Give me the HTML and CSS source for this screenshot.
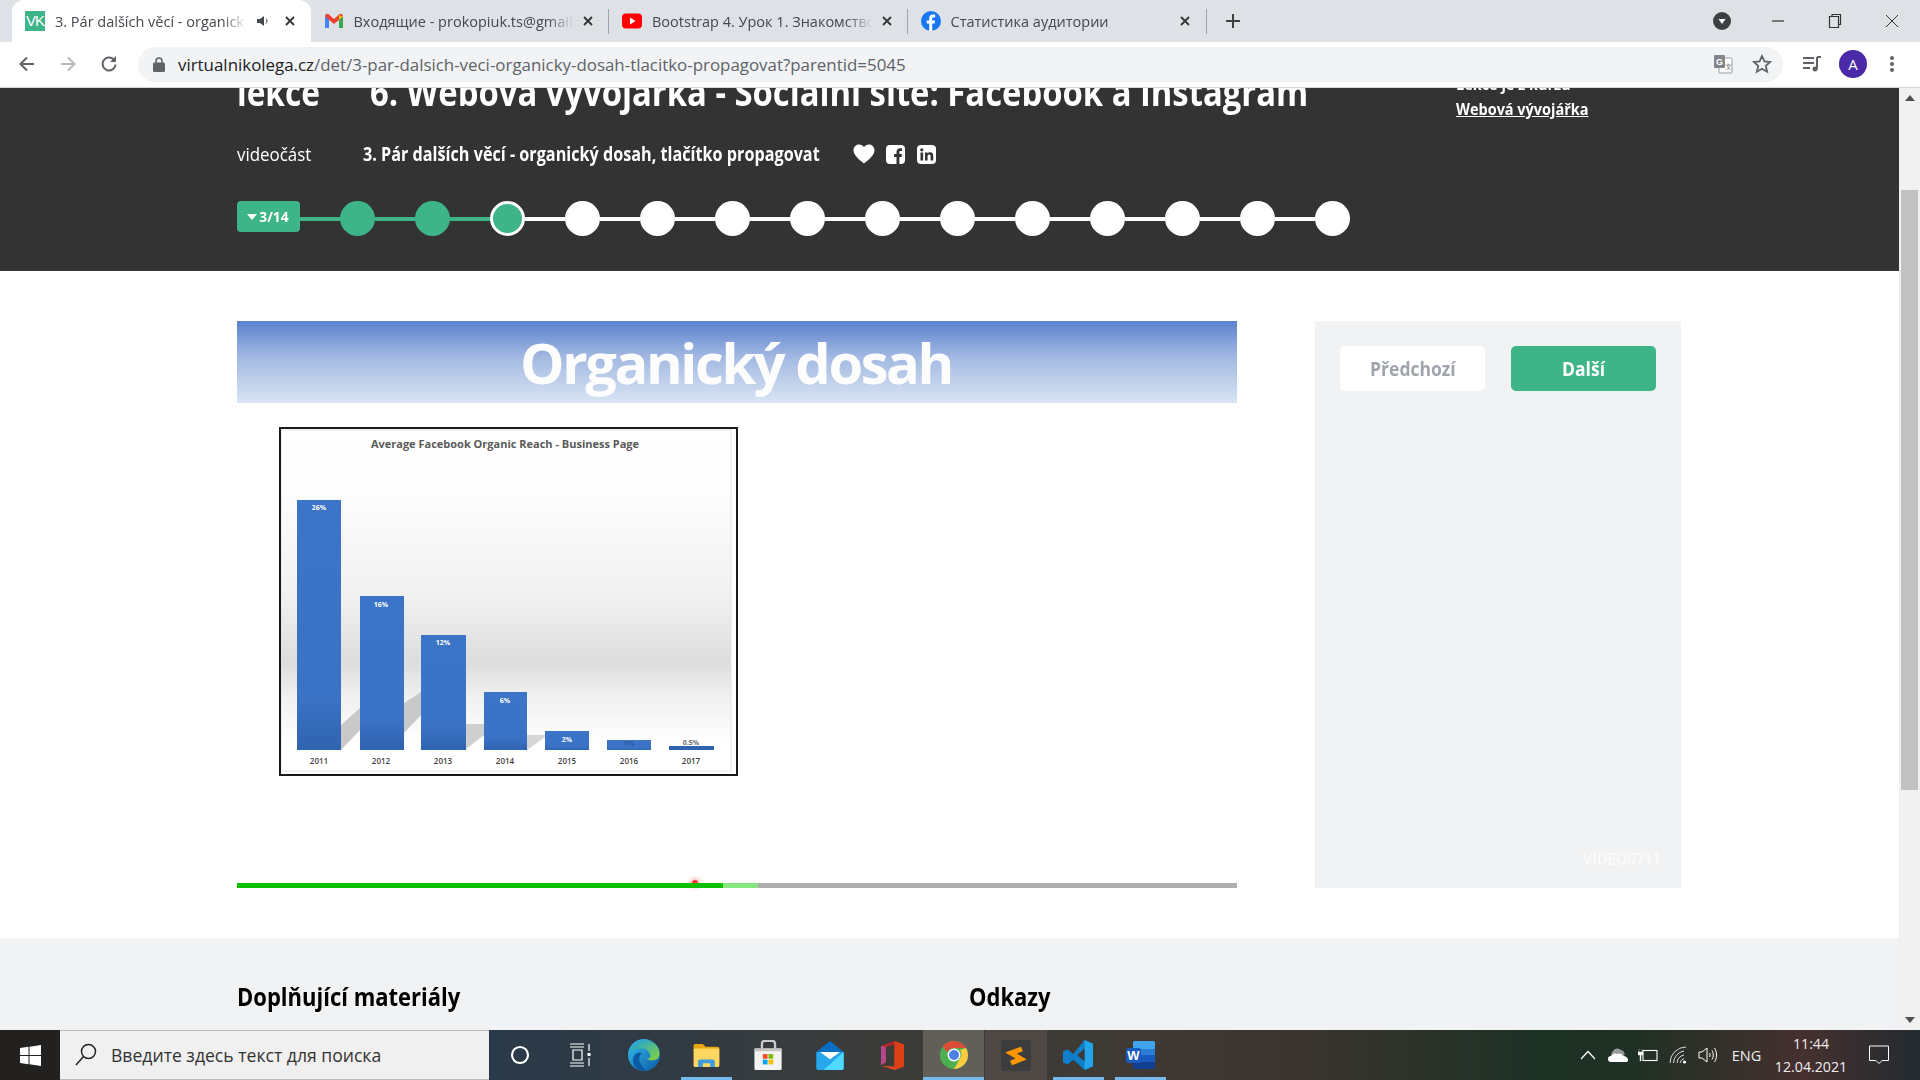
FILE: index.html
```html
<!DOCTYPE html>
<html lang="en">
<head>
    <meta charset="UTF-8">
    <title>3. Pár dalších věcí - organický dosah</title>
    <link rel="stylesheet" href="styles.css">
</head>
<body>
<div class="browser">
    <div class="tabstrip">
        <div class="tab tab-active">
            <span class="fav-vk">VK</span>
            <span class="tab-title tab-title-short">3. Pár dalších věcí - organický dosah</span>
            <svg class="tab-sound" width="14" height="14" viewBox="0 0 14 14"><path d="M1 5h3l4-3v10l-4-3H1z" fill="#45484d"/><path d="M10 4.500c1.300 1.500 1.300 3.500 0 5" stroke="#45484d" fill="none"/></svg>
            <svg class="tab-x" width="12" height="12" viewBox="0 0 12 12"><path d="M2 2l8 8M10 2l-8 8" stroke="#333" stroke-width="1.800"/></svg>
        </div>
        <div class="tab">
            <svg class="fav" width="20" height="16" viewBox="0 0 20 16"><path d="M1 15V3l4 3V15z" fill="#4285f4"/><path d="M15 15V6l4-3v12z" fill="#34a853"/><path d="M1 3.500C1 1 3.500 0 5 1.500L10 6l5-4.500C16.500 0 19 1 19 3.500L15 7l-5 4-5-4z" fill="#ea4335"/><path d="M15 2l4 1.500L15 7z" fill="#fbbc04"/></svg>
            <span class="tab-title">Входящие - prokopiuk.ts@gmail.com</span>
            <svg class="tab-x" width="12" height="12" viewBox="0 0 12 12"><path d="M2 2l8 8M10 2l-8 8" stroke="#333" stroke-width="1.800"/></svg>
        </div>
        <div class="tab tab-sep">
            <svg class="fav" width="20" height="16" viewBox="0 0 20 16"><rect width="20" height="15" y="0.500" rx="4" fill="#f00"/><path d="M8 4.500l5.500 3.500L8 11.500z" fill="#fff"/></svg>
            <span class="tab-title">Bootstrap 4. Урок 1. Знакомство с фреймворком</span>
            <svg class="tab-x" width="12" height="12" viewBox="0 0 12 12"><path d="M2 2l8 8M10 2l-8 8" stroke="#333" stroke-width="1.800"/></svg>
        </div>
        <div class="tab tab-sep">
            <svg class="fav" width="20" height="20" viewBox="0 0 20 20"><circle cx="10" cy="10" r="10" fill="#1877f2"/><path d="M11.200 20v-7.500h2.500l.4-3h-2.900V7.800c0-.9.300-1.400 1.500-1.400h1.500V3.700c-.3 0-1.200-.1-2.200-.1-2.300 0-3.800 1.400-3.800 3.900v2H5.700v3h2.500V20z" fill="#fff"/></svg>
            <span class="tab-title">Статистика аудитории</span>
            <svg class="tab-x" width="12" height="12" viewBox="0 0 12 12"><path d="M2 2l8 8M10 2l-8 8" stroke="#333" stroke-width="1.800"/></svg>
        </div>
        <div class="tab-new">
            <svg width="16" height="16" viewBox="0 0 16 16"><path d="M8 1v14M1 8h14" stroke="#3c4043" stroke-width="2"/></svg>
        </div>
        <div class="tab-media">
            <svg width="18" height="18" viewBox="0 0 18 18"><circle cx="9" cy="9" r="9" fill="#3c4043"/><path d="M5.500 7h7L9 12z" fill="#fff"/></svg>
        </div>
        <div class="win-btn">
            <svg width="14" height="14" viewBox="0 0 14 14"><path d="M1 7h12" stroke="#333" stroke-width="1.200"/></svg>
        </div>
        <div class="win-btn">
            <svg width="14" height="16" viewBox="0 0 14 16"><path d="M1.500 3.500h9v11h-9zM4 3.500V1.500h8.500v10h-2" stroke="#333" stroke-width="1.200" fill="none"/></svg>
        </div>
        <div class="win-btn">
            <svg width="14" height="14" viewBox="0 0 14 14"><path d="M1 1l12 12M13 1L1 13" stroke="#333" stroke-width="1"/></svg>
        </div>
    </div>

    <div class="toolbar">
        <svg class="nav-ico" width="18" height="18" viewBox="0 0 18 18"><path d="M16 9H3M9 2.500L2.500 9 9 15.500" stroke="#5f6368" stroke-width="2" fill="none"/></svg>
        <svg class="nav-ico" width="18" height="18" viewBox="0 0 18 18"><path d="M2 9h13M9 2.500L15.500 9 9 15.500" stroke="#b7b9bc" stroke-width="2" fill="none"/></svg>
        <svg class="nav-ico" width="18" height="18" viewBox="0 0 18 18"><path d="M15.500 9.500a6.500 6.500 0 1 1-1.800-5" stroke="#5f6368" stroke-width="2" fill="none"/><path d="M16 1v6h-6z" fill="#5f6368"/></svg>
        <div class="omnibox">
            <svg width="12" height="15" viewBox="0 0 12 15"><rect y="5.500" width="12" height="9.500" rx="1.500" fill="#5f6368"/><path d="M3 6V4a3 3 0 0 1 6 0v2" stroke="#5f6368" stroke-width="1.600" fill="none"/></svg>
            <div class="url"><b>virtualnikolega.cz</b>/det/3-par-dalsich-veci-organicky-dosah-tlacitko-propagovat?parentid=5045</div>
            <svg class="omni-translate" width="20" height="20" viewBox="0 0 20 20"><rect x="6" y="4" width="13" height="15" rx="1" fill="#fff" stroke="#9a9da1"/><rect x="1" y="1" width="11" height="13" rx="1" fill="#80868b"/><text x="3" y="11" class="omni-g">G</text><text x="12" y="15" class="omni-x">文</text></svg>
            <svg class="omni-star" width="20" height="20" viewBox="0 0 20 20"><path d="M10 2l2.400 5.400 5.800.6-4.400 3.900 1.300 5.800L10 14.700l-5.100 3 1.300-5.800L1.800 8l5.800-.6z" stroke="#5f6368" stroke-width="1.800" fill="none"/></svg>
        </div>
        <svg class="tool-media" width="20" height="18" viewBox="0 0 20 18"><path d="M1 3h11M1 8h11M1 13h7" stroke="#5f6368" stroke-width="2"/><path d="M15 2h4M15 2v12" stroke="#5f6368" stroke-width="2" fill="none"/><circle cx="13" cy="14" r="2.500" fill="#5f6368"/></svg>
        <div class="avatar">A</div>
        <svg class="tool-dots" width="4" height="18" viewBox="0 0 4 18"><circle cx="2" cy="3" r="2" fill="#5f6368"/><circle cx="2" cy="9" r="2" fill="#5f6368"/><circle cx="2" cy="15" r="2" fill="#5f6368"/></svg>
    </div>

    <div class="viewport">
        <div class="page">
            <div class="head">
                <div class="head-left">
                    <div class="lesson-row">
                        <span class="lesson-label">lekce</span>
                        <span class="lesson-name">6. Webová vývojářka - Sociální sítě: Facebook a Instagram</span>
                    </div>
                    <div class="part-row">
                        <span class="part-label">videočást</span>
                        <span class="part-name">3. Pár dalších věcí - organický dosah, tlačítko propagovat</span>
                        <svg class="part-heart" width="22" height="20" viewBox="0 0 22 20"><path d="M11 19.500C4 14 .5 10.500.5 6.300.5 3 3 .5 6 .5c2 0 3.900 1 5 2.800C12.100 1.500 14 .5 16 .5c3 0 5.500 2.500 5.500 5.800 0 4.200-3.500 7.700-10.500 13.200z" fill="#fff"/></svg>
                        <svg class="part-social" width="19" height="19" viewBox="0 0 19 19"><rect width="19" height="19" rx="4" fill="#fff"/><path d="M10.500 19v-7H8V9h2.500V7c0-2.500 1.500-3.800 3.700-3.800H16v2.700h-1.300c-1 0-1.300.5-1.300 1.300V9H16l-.4 3h-2.200v7z" fill="#333"/></svg>
                        <svg class="part-social" width="19" height="19" viewBox="0 0 19 19"><rect width="19" height="19" rx="4" fill="#fff"/><rect x="3.500" y="7.500" width="2.600" height="8" fill="#333"/><circle cx="4.800" cy="4.800" r="1.600" fill="#333"/><path d="M8 7.500h2.500v1.200c.5-.9 1.500-1.400 2.700-1.400 2.300 0 3 1.500 3 3.700v4.500h-2.600v-4c0-1.200-.3-2-1.300-2-1.100 0-1.700.8-1.700 2v4H8z" fill="#333"/></svg>
                    </div>
                    <div class="steps">
                        <div class="step-badge"><span class="step-arrow"></span><span class="step-count">3/14</span></div>
                        <span class="step-line step-line-done"></span>
                        <span class="step step-done"></span>
                        <span class="step-line step-line-done"></span>
                        <span class="step step-done"></span>
                        <span class="step-line step-line-done"></span>
                        <span class="step step-now"></span>
                        <span class="step-line"></span><span class="step"></span>
                        <span class="step-line"></span><span class="step"></span>
                        <span class="step-line"></span><span class="step"></span>
                        <span class="step-line"></span><span class="step"></span>
                        <span class="step-line"></span><span class="step"></span>
                        <span class="step-line"></span><span class="step"></span>
                        <span class="step-line"></span><span class="step"></span>
                        <span class="step-line"></span><span class="step"></span>
                        <span class="step-line"></span><span class="step"></span>
                        <span class="step-line"></span><span class="step"></span>
                        <span class="step-line"></span><span class="step"></span>
                    </div>
                </div>
                <div class="head-right">
                    <div class="course-label">Lekce je z kurzu</div>
                    <a class="course-link">Webová vývojářka</a>
                </div>
            </div>

            <div class="main">
                <div class="video">
                    <div class="slide-title">Organický dosah</div>
                    <div class="slide-chart">
                        <svg width="455" height="345" viewBox="281 429 455 345">
                            <defs>
                                <linearGradient id="chartbg" x1="0" y1="0" x2="0" y2="1">
                                    <stop offset="0" stop-color="#fff"/>
                                    <stop offset="0.18" stop-color="#fdfdfd"/>
                                    <stop offset="0.5" stop-color="#f0f0ef"/>
                                    <stop offset="0.68" stop-color="#dcdddc"/>
                                    <stop offset="0.78" stop-color="#f0f0f0"/>
                                    <stop offset="0.92" stop-color="#fff"/>
                                </linearGradient>
                                <linearGradient id="barfill" x1="0" y1="0" x2="0" y2="1">
                                    <stop offset="0" stop-color="#3c74c8"/>
                                    <stop offset="0.8" stop-color="#3a72c5"/>
                                    <stop offset="1" stop-color="#2f63ae"/>
                                </linearGradient>
                            </defs>
                            <rect x="281" y="430" width="450" height="341" fill="url(#chartbg)" stroke="#e4e4e4"/>
                            <polygon points="341,725 360,708 360,730 341,750" fill="#c9c9c9"/>
                            <polygon points="404,703 421,692 421,715 404,733" fill="#c9c9c9"/>
                            <polygon points="466,724 484,724 484,735 466,749" fill="#cfcfcf"/>
                            <polygon points="527,735 545,735 545,737 527,750" fill="#d6d6d6"/>
                            <rect x="297" y="500" width="44" height="250" fill="url(#barfill)"/>
                            <rect x="360" y="596" width="44" height="154" fill="url(#barfill)"/>
                            <rect x="421" y="635" width="45" height="115" fill="url(#barfill)"/>
                            <rect x="484" y="692" width="43" height="58" fill="url(#barfill)"/>
                            <rect x="545" y="731" width="44" height="19" fill="url(#barfill)"/>
                            <rect x="607" y="740" width="44" height="10" fill="url(#barfill)"/>
                            <rect x="669" y="746" width="45" height="4" fill="#2f63ae"/>
                            <text class="chart-title" x="505" y="448">Average Facebook Organic Reach - Business Page</text>
                            <text class="chart-val" x="319" y="510">26%</text>
                            <text class="chart-val" x="381" y="607">16%</text>
                            <text class="chart-val" x="443" y="645">12%</text>
                            <text class="chart-val" x="505" y="703">6%</text>
                            <text class="chart-val" x="567" y="742">2%</text>
                            <text class="chart-val chart-val-dim" x="629" y="746">1%</text>
                            <text class="chart-val chart-val-out" x="691" y="745">0.5%</text>
                            <text class="chart-year" x="319" y="764">2011</text>
                            <text class="chart-year" x="381" y="764">2012</text>
                            <text class="chart-year" x="443" y="764">2013</text>
                            <text class="chart-year" x="505" y="764">2014</text>
                            <text class="chart-year" x="567" y="764">2015</text>
                            <text class="chart-year" x="629" y="764">2016</text>
                            <text class="chart-year" x="691" y="764">2017</text>
                        </svg>
                    </div>
                    <div class="progress">
                        <div class="progress-dot"></div>
                        <div class="progress-played"></div>
                        <div class="progress-buffer"></div>
                    </div>
                </div>
                <div class="side">
                    <div class="side-btns">
                        <a class="btn btn-prev"><span class="btn-text">Předchozí</span></a>
                        <a class="btn btn-next"><span class="btn-text">Další</span></a>
                    </div>
                    <div class="side-code">VIDEO0711</div>
                </div>
            </div>

            <div class="extras">
                <h2 class="extras-title">Doplňující materiály</h2>
                <h2 class="extras-title">Odkazy</h2>
            </div>
        </div>
        <div class="scrollbar">
            <span class="sb-arrow sb-up"></span>
            <span class="sb-thumb"></span>
            <span class="sb-arrow sb-down"></span>
        </div>
    </div>

    <div class="taskbar">
        <div class="start">
            <svg width="21" height="21" viewBox="0 0 21 21"><path d="M0 3l8.500-1.200V10H0zM9.500 1.700L21 0v10H9.500zM0 11h8.500v8.200L0 18zM9.500 11H21v10L9.500 19.300z" fill="#fff"/></svg>
        </div>
        <div class="search">
            <svg width="22" height="24" viewBox="0 0 22 24"><circle cx="13.500" cy="8.500" r="7" stroke="#222" stroke-width="1.500" fill="none"/><path d="M8.500 13.500L1 22" stroke="#222" stroke-width="1.500"/></svg>
            <span>Введите здесь текст для поиска</span>
        </div>
        <div class="task-cell">
            <svg width="20" height="20" viewBox="0 0 20 20"><circle cx="10" cy="10" r="8" stroke="#fff" stroke-width="2.200" fill="none"/></svg>
        </div>
        <div class="task-cell">
            <svg class="task-view" width="22" height="24" viewBox="0 0 22 24"><path d="M1 1h14M1 23h14M4 7h9v10H4zM1 4h14M1 20h14" stroke="#fff" stroke-width="1.200" fill="none"/><path d="M20 1v7M20 15v8" stroke="#fff" stroke-width="1.200"/><rect x="18.500" y="10" width="3" height="3" fill="#fff"/></svg>
        </div>
        <div class="task-cell">
            <svg width="32" height="32" viewBox="0 0 32 32"><defs><linearGradient id="edgea" x1="0" y1="0" x2="1" y2="1"><stop offset="0" stop-color="#35c1f1"/><stop offset="1" stop-color="#0c59a4"/></linearGradient><linearGradient id="edgeb" x1="0" y1="0" x2="1" y2="1"><stop offset="0" stop-color="#1b9de2"/><stop offset="1" stop-color="#86d633"/></linearGradient></defs><circle cx="16" cy="16" r="16" fill="url(#edgea)"/><path d="M3 9C8 1 20-1 27 5c5 4 6 12 2 15-3 2-9 2-10-1 3 1 4-1 3-4-2-5-8-7-13-5-3 1-5 2-6-1z" fill="url(#edgeb)"/><path d="M18 31c-7 2-13-3-13-10 0-5 5-9 9-7-3 2-4 7-1 11 1 3 3 5 5 6z" fill="#0c59a4"/></svg>
        </div>
        <div class="task-cell task-on">
            <svg width="27" height="24" viewBox="0 0 28 26"><path d="M0 3a2 2 0 0 1 2-2h8l3 3h13a2 2 0 0 1 2 2v2H0z" fill="#e8a713"/><rect y="6" width="28" height="20" rx="2" fill="#ffd75e"/><path d="M5 26v-6c0-1 1-2 2-2h14c1 0 2 1 2 2v6h-5v-4h-8v4z" fill="#3d9be0"/></svg>
        </div>
        <div class="task-cell">
            <svg width="29" height="30" viewBox="0 0 30 32"><path d="M8 9V4a3 3 0 0 1 3-3h8a3 3 0 0 1 3 3v5" stroke="#ccc" stroke-width="2.500" fill="none"/><rect y="9" width="29" height="23" rx="1" fill="#f3f3f3"/><rect y="9" width="29" height="3" fill="#c4c4c4"/><rect x="9" y="15" width="5" height="5" fill="#f25022"/><rect x="15" y="15" width="5" height="5" fill="#7fba00"/><rect x="9" y="21" width="5" height="5" fill="#00a4ef"/><rect x="15" y="21" width="5" height="5" fill="#ffb900"/></svg>
        </div>
        <div class="task-cell">
            <svg width="30" height="29" viewBox="0 0 30 32"><path d="M0 12L15 0l15 12v18a2 2 0 0 1-2 2H2a2 2 0 0 1-2-2z" fill="#0a6fc4"/><path d="M0 12h30v18a2 2 0 0 1-2 2H2a2 2 0 0 1-2-2z" fill="#28a8ea"/><path d="M30 12v18a2 2 0 0 1-2 2H8z" fill="#50d9ff"/><path d="M4 12h22l-11 8z" fill="#fff"/></svg>
        </div>
        <div class="task-cell">
            <svg width="23" height="29" viewBox="0 0 24 34" preserveAspectRatio="none"><defs><linearGradient id="offa" x1="0" y1="0" x2="0" y2="1"><stop offset="0" stop-color="#b3202a"/><stop offset="1" stop-color="#e64a19"/></linearGradient></defs><path d="M14 0l10 4v26l-10 4-14-5 14 1V4L5 7v18l-5 3V6z" fill="url(#offa)"/><path d="M14 0l10 4v26l-10 4z" fill="#dc3e15"/><path d="M0 6l5 1v18l-5 3z" fill="#b5478a"/></svg>
        </div>
        <div class="task-cell task-on task-hover">
            <svg width="28" height="28" viewBox="0 0 28 28"><circle cx="14" cy="14" r="14" fill="#4caf50"/><path d="M14 0a14 14 0 0 1 12.100 7H14a7 7 0 0 0-6.500 4.500L2.500 5.500A14 14 0 0 1 14 0z" fill="#dd4b39"/><path d="M26.100 7A14 14 0 0 1 14 28l6-10.500A7 7 0 0 0 20 9z" fill="#ffcd40"/><circle cx="14" cy="14" r="6.500" fill="#fff"/><circle cx="14" cy="14" r="5" fill="#4d7fe8"/></svg>
        </div>
        <div class="task-cell task-open">
            <svg width="30" height="31" viewBox="0 0 30 31"><rect width="30" height="31" rx="3" fill="#3c3c3c"/><path d="M21 9L10 13l10 6-10 4" stroke="#ff9800" stroke-width="5" fill="none"/></svg>
        </div>
        <div class="task-cell task-on">
            <svg width="30" height="30" viewBox="0 0 32 32"><path d="M23 0l9 4v24l-9 4-12-11-6 5-5-2V12l5-2 6 5z" fill="#0e7fc8"/><path d="M23 0l9 4v24l-9 4z" fill="#22a5ea"/><path d="M23 9l-8 7 8 7z" fill="#3c3a38"/></svg>
        </div>
        <div class="task-cell task-on">
            <svg width="29" height="28" viewBox="0 0 29 28"><rect x="7" width="22" height="28" rx="2" fill="#2b7cd3"/><rect x="7" width="22" height="8" rx="2" fill="#41a5ee"/><rect x="7" y="14" width="22" height="7" fill="#185abd"/><rect x="7" y="21" width="22" height="7" fill="#103f91"/><rect y="7" width="15" height="15" rx="2" fill="#185abd"/><text x="7.500" y="19" class="word-w">W</text></svg>
        </div>
        <div class="tray">
            <div class="tray-cell"><svg width="16" height="10" viewBox="0 0 16 10"><path d="M1 9l7-7.500L15 9" stroke="#fff" stroke-width="1.200" fill="none"/></svg></div>
            <div class="tray-cell"><svg width="20" height="14" viewBox="0 0 20 14"><path d="M4 8a4 4 0 0 1 1-5 5 5 0 0 1 8-1 4 4 0 0 1 3 6z" fill="#9a9a9a"/><path d="M3 14a3 3 0 0 1 0-6c1-2 4-3 6-2 1-1 5-1 6 2 3 0 5 2 5 4s-1 2-2 2z" fill="#fff"/></svg></div>
            <div class="tray-cell"><svg width="20" height="14" viewBox="0 0 20 14"><rect x="5" y="2.500" width="14" height="10" fill="none" stroke="#fff" stroke-width="1.100"/><path d="M1 1v3M4 1v3M0 4h5v3H3v6H2V7H0z" fill="#fff" stroke="#fff" stroke-width=".4"/></svg></div>
            <div class="tray-cell"><svg width="18" height="18" viewBox="0 0 18 18"><g fill="none" stroke="#ddd" stroke-width="1"><path d="M1 17A16 16 0 0 1 17 1"/><path d="M4.500 17A12.500 12.500 0 0 1 15 5"/><path d="M8 17a9 9 0 0 1 7-8"/><path d="M11 17a6 6 0 0 1 4-4.500"/></g><circle cx="15.500" cy="16" r="1.600" fill="#fff"/></svg></div>
            <div class="tray-cell"><svg width="20" height="18" viewBox="0 0 20 18"><path d="M1 6h3l5-4v14l-5-4H1z" stroke="#fff" fill="none"/><path d="M11.500 7c.8 1.200.8 2.800 0 4M14 4.500c1.800 2.800 1.800 6.200 0 9M16.500 2c2.700 4 2.700 10 0 14" stroke="#fff" fill="none"/></svg></div>
            <div class="tray-lang">ENG</div>
            <div class="tray-clock"><div>11:44</div><div>12.04.2021</div></div>
            <div class="tray-note"><svg width="20" height="20" viewBox="0 0 20 20"><path d="M.5 1h19v14.500h-6.500L10 18.500l-3-3H.5z" fill="none" stroke="#fff"/></svg></div>
        </div>
    </div>
</div>
</body>
</html>
```

FILE: styles.css
```css
* {
    margin: 0;
    padding: 0;
    box-sizing: border-box;
}
html, body {
    height: 100%;
    overflow: hidden;
}
body {
    font-family: "Liberation Sans", sans-serif;
    background: #fff;
}
.browser {
    display: flex;
    flex-direction: column;
    height: 1080px;
    width: 1920px;
}

/* tab strip */
.tabstrip {
    display: flex;
    align-items: center;
    height: 42px;
    flex: none;
    background: #dee1e6;
    padding-left: 12px;
    font-family: "Open Sans", sans-serif;
    font-size: 14.5px;
    color: #45484d;
}
.tab {
    display: flex;
    align-items: center;
    width: 298.5px;
    height: 42px;
    padding: 0 15px 0 13px;
    position: relative;
}
.tab-active {
    background: #fff;
    border-radius: 12px 12px 0 0;
}
.tab-sep::before {
    content: "";
    position: absolute;
    left: -1px;
    top: 9px;
    height: 25px;
    width: 1px;
    background: #9ea1a6;
}
.fav-vk {
    width: 20px;
    height: 20px;
    flex: none;
    background: #3eb489;
    color: #fff;
    font-size: 15px;
    line-height: 20px;
    text-align: center;
    letter-spacing: -1px;
    font-family: "Liberation Sans", sans-serif;
}
.fav {
    flex: none;
}
.tab-title {
    flex: 1;
    margin-left: 10px;
    white-space: nowrap;
    overflow: hidden;
    -webkit-mask-image: linear-gradient(to right, #000 88%, transparent);
    mask-image: linear-gradient(to right, #000 88%, transparent);
}
.tab-sound {
    margin: 0 6px 0 10px;
    flex: none;
}
.tab-x {
    flex: none;
    margin-left: 8px;
}
.tab-new {
    width: 53px;
    display: flex;
    justify-content: center;
    position: relative;
}
.tab-new::before {
    content: "";
    position: absolute;
    left: 0;
    top: -4px;
    height: 25px;
    width: 1px;
    background: #9ea1a6;
}
.tab-media {
    margin-left: auto;
    margin-right: 18px;
    display: flex;
}
.win-btn {
    width: 57px;
    display: flex;
    justify-content: center;
}

/* toolbar */
.toolbar {
    display: flex;
    align-items: center;
    height: 46px;
    flex: none;
    background: #fff;
    border-bottom: 1px solid #d4d6d9;
    padding: 0 0 1px 18px;
}
.nav-ico {
    flex: none;
    margin-right: 23px;
}
.omnibox {
    display: flex;
    align-items: center;
    width: 1645px;
    height: 35px;
    margin-left: -3px;
    background: #f1f3f4;
    border-radius: 18px;
    padding-left: 15px;
}
.url {
    margin-left: 13px;
    font-family: "Open Sans", sans-serif;
    font-size: 16.9px;
    color: #5f6368;
    white-space: nowrap;
    flex: 1;
}
.url b {
    font-weight: 400;
    color: #202124;
}
.omni-translate {
    flex: none;
    margin-right: 19px;
}
.omni-star {
    flex: none;
    margin-right: 11px;
}
.omni-g {
    font-size: 9px;
    font-weight: 700;
    fill: #fff;
}
.omni-x {
    font-size: 7px;
    fill: #5f6368;
}
.tool-media {
    flex: none;
    margin-left: 19px;
}
.avatar {
    width: 28px;
    height: 28px;
    margin-left: 17px;
    flex: none;
    border-radius: 50%;
    background: #4b2aa8;
    color: #fff;
    font-family: "Open Sans", sans-serif;
    font-size: 15px;
    line-height: 28px;
    text-align: center;
}
.tool-dots {
    flex: none;
    margin-left: 23px;
}

/* page area */
.viewport {
    flex: 1;
    display: flex;
    min-height: 0;
}
.page {
    flex: 1;
    min-width: 0;
    overflow: hidden;
    font-family: "Open Sans", sans-serif;
}
.scrollbar {
    width: 21px;
    flex: none;
    background: #f1f1f1;
    display: flex;
    flex-direction: column;
    align-items: center;
    position: relative;
}
.sb-arrow {
    width: 0;
    height: 0;
    border-left: 5px solid transparent;
    border-right: 5px solid transparent;
    position: absolute;
}
.sb-up {
    top: 7px;
    border-bottom: 6px solid #505050;
}
.sb-down {
    bottom: 7px;
    border-top: 6px solid #505050;
}
.sb-thumb {
    width: 17px;
    height: 600px;
    margin-top: 102px;
    background: #c1c1c1;
}

/* dark lesson header, the site's font is condensed so the text gets squeezed */
.head {
    height: 183px;
    background: #333;
    color: #fff;
    display: flex;
    padding-left: 237px;
    overflow: hidden;
}
.head-left {
    width: 1219px;
    flex: none;
}
.lesson-row {
    display: flex;
    margin-top: -22px;
    height: 50px;
    line-height: 50px;
    white-space: nowrap;
    font-size: 38px;
    font-weight: 700;
}
.lesson-label {
    width: 133px;
    flex: none;
    transform: scaleX(0.833);
    transform-origin: left;
}
.lesson-name {
    flex: none;
    transform: scaleX(0.863);
    transform-origin: left;
}
.part-row {
    display: flex;
    align-items: center;
    margin-top: 22px;
    height: 32px;
    white-space: nowrap;
}
.part-label {
    width: 126px;
    flex: none;
    font-size: 18px;
    transform: scaleX(0.94);
    transform-origin: left;
}
.part-name {
    width: 490px;
    flex: none;
    font-size: 19px;
    font-weight: 700;
    transform: scaleX(0.852);
    transform-origin: left;
}
.part-heart {
    flex: none;
    margin-right: 11px;
}
.part-social {
    flex: none;
    margin-right: 12px;
}
.steps {
    display: flex;
    align-items: center;
    margin-top: 31px;
    height: 35px;
}
.step-badge {
    width: 63px;
    height: 31px;
    flex: none;
    margin-bottom: 4px;
    background: #3eb489;
    border-radius: 4px;
    font-size: 15px;
    font-weight: 700;
    line-height: 31px;
    display: flex;
    align-items: center;
    justify-content: center;
}
.step-count {
    transform: scaleX(0.92);
}
.step-arrow {
    width: 0;
    height: 0;
    border-left: 5px solid transparent;
    border-right: 5px solid transparent;
    border-top: 6px solid #fff;
    margin-right: 1px;
}
.step {
    width: 35px;
    height: 35px;
    flex: none;
    border-radius: 50%;
    background: #fff;
}
.step-done {
    background: #3eb489;
}
.step-now {
    background: #3eb489;
    border: 3px solid #fff;
}
.step-line {
    width: 40px;
    height: 4px;
    flex: none;
    background: #fff;
}
.step-line-done {
    background: #3eb489;
}
.head-right {
    font-size: 16px;
    line-height: 24px;
    margin-top: -16px;
    white-space: nowrap;
}
.course-label {
    font-weight: 700;
    transform: scaleX(0.904);
    transform-origin: left;
}
.course-link {
    margin-top: 1px;
    display: block;
    font-weight: 700;
    text-decoration: underline;
    transform: scaleX(0.904);
    transform-origin: left;
}

/* video + side panel */
.main {
    height: 667px;
    padding: 50px 0 0 237px;
    display: flex;
    background: #fff;
}
.video {
    width: 1000px;
    flex: none;
}
.slide-title {
    height: 82px;
    background: linear-gradient(#5a82cf, #a4bae2 45%, #d9e4f4);
    color: #fdfdfe;
    font-family: "Open Sans", sans-serif;
    font-size: 56px;
    font-weight: 700;
    line-height: 82px;
    text-align: center;
    padding-right: 2px;
    letter-spacing: -2.4px;
    white-space: nowrap;
}
.slide-chart {
    width: 459px;
    height: 349px;
    margin: 24px 0 0 42px;
    border: 2px solid #1a1a1a;
    background: #fff;
}
.slide-chart svg {
    display: block;
}
.chart-title {
    font-family: "Open Sans", sans-serif;
    font-size: 11px;
    font-weight: 700;
    fill: #595959;
    text-anchor: middle;
}
.chart-val {
    font-family: "Open Sans", sans-serif;
    font-size: 7px;
    font-weight: 700;
    fill: #fff;
    text-anchor: middle;
}
.chart-val-dim {
    fill: #2a5aa5;
}
.chart-val-out {
    fill: #6d6d6d;
}
.chart-year {
    font-family: "Open Sans", sans-serif;
    font-size: 8px;
    font-weight: 600;
    fill: #404040;
    text-anchor: middle;
}
.progress {
    display: flex;
    height: 5px;
    margin-top: 107px;
    background: #aeaeae;
    position: relative;
}
.progress-played {
    width: 486px;
    background: #0cc000;
    position: relative;
}
.progress-buffer {
    width: 35px;
    background: #85e67f;
}
.progress-dot {
    position: absolute;
    left: 455px;
    top: -3px;
    width: 6px;
    height: 6px;
    border-radius: 50%;
    background: #f33;
    box-shadow: 0 0 4px 2px rgba(255, 80, 80, 0.4);
}
.side {
    width: 366px;
    height: 567px;
    margin-left: 78px;
    background: #f1f2f4;
    padding: 25px 20px 18px 25px;
    display: flex;
    flex-direction: column;
}
.side-btns {
    display: flex;
    gap: 26px;
}
.btn {
    width: 145px;
    height: 45px;
    border-radius: 5px;
    font-size: 20px;
    font-weight: 700;
    line-height: 45px;
    text-align: center;
}
.btn-text {
    display: inline-block;
    transform: scaleX(0.875);
}
.btn-prev {
    background: #fff;
    color: #a0a4ac;
}
.btn-next {
    background: #3eb489;
    color: #fff;
}
.side-code {
    margin-top: auto;
    text-align: right;
    color: #fbfbfc;
    font-size: 16px;
    font-weight: 600;
    transform: scaleX(0.92);
    transform-origin: right;
}

/* bottom section */
.extras {
    height: 100px;
    background: #f1f2f4;
    display: flex;
    padding: 43px 0 0 237px;
}
.extras-title {
    width: 732px;
    flex: none;
    font-size: 25px;
    font-weight: 700;
    color: #000;
    line-height: 30px;
    transform: scaleX(0.88);
    transform-origin: left;
}

/* windows taskbar */
.taskbar {
    height: 50px;
    flex: none;
    display: flex;
    background: linear-gradient(to right, #2a3a4a 25%, #2f3a44 33%, #3b3c3a 45%, #3f3934 60%, #3a342f 68%, #1d3125 80%, #1f3024 85%, #46302f 94%, #222b30 100%);
    color: #fff;
    font-family: "Open Sans", sans-serif;
}
.start {
    width: 60px;
    flex: none;
    background: #23211f;
    display: flex;
    align-items: center;
    justify-content: center;
}
.search {
    width: 429px;
    flex: none;
    background: #f0f0f0;
    border-top: 1px solid #bbb;
    border-bottom: 1px solid #bbb;
    display: flex;
    align-items: center;
    padding-left: 15px;
    gap: 14px;
    color: #333;
    font-size: 17.6px;
}
.task-cell {
    width: 62px;
    flex: none;
    display: flex;
    align-items: center;
    justify-content: center;
}
.task-view {
    margin-right: 5px;
}
.task-on {
    background: linear-gradient(#76b9ed, #76b9ed) center bottom / 51px 3px no-repeat;
}
.task-hover {
    background: linear-gradient(#76b9ed, #76b9ed) left bottom / 61px 3px no-repeat, linear-gradient(to right, #625e58 61px, #3b3735 61px);
}
.task-open {
    background: #4f4744;
}
.word-w {
    font-family: "Liberation Sans", sans-serif;
    font-size: 13px;
    font-weight: 700;
    fill: #fff;
    text-anchor: middle;
}
.tray {
    margin-left: auto;
    display: flex;
    align-items: center;
    padding-right: 14px;
    font-size: 14px;
    color: #eee;
}
.tray-cell {
    width: 30px;
    display: flex;
    justify-content: center;
}
.tray-lang {
    width: 47px;
    text-align: center;
    font-size: 14.5px;
}
.tray-clock {
    width: 82px;
    text-align: center;
    font-size: 14.2px;
    line-height: 23px;
}
.tray-note {
    width: 54px;
    display: flex;
    justify-content: center;
}
```
